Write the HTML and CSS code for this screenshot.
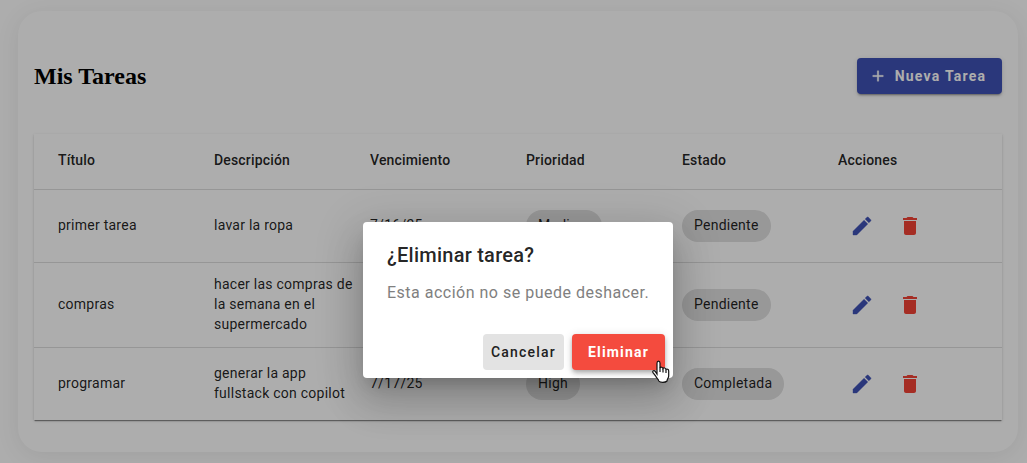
FILE: index.html
```html
<!DOCTYPE html>
<html lang="es">
<head>
<meta charset="utf-8">
<title>Mis Tareas</title>
<link rel="stylesheet" href="styles.css">
</head>
<body>
<svg class="sprite" width="0" height="0">
  <symbol id="edit" viewBox="0 0 24 24"><path d="M3 17.25V21h3.75L17.81 9.94l-3.75-3.75L3 17.25zM20.71 7.04a1 1 0 0 0 0-1.41l-2.34-2.34a1 1 0 0 0-1.41 0l-1.83 1.83 3.75 3.75 1.83-1.83z"/></symbol>
  <symbol id="delete" viewBox="0 0 24 24"><path d="M6 19c0 1.1.9 2 2 2h8c1.1 0 2-.9 2-2V7H6v12zM19 4h-3.5l-1-1h-5l-1 1H5v2h14V4z"/></symbol>
</svg>
<main class="card">
  <header class="card-header">
    <h2 class="title">Mis Tareas</h2>
    <button class="btn btn-primary"><svg class="add" viewBox="0 0 24 24"><path d="M19 13h-6v6h-2v-6H5v-2h6V5h2v6h6v2z"/></svg><span>Nueva Tarea</span></button>
  </header>
  <section class="table">
    <div class="row head"><div>Título</div><div>Descripción</div><div>Vencimiento</div><div>Prioridad</div><div>Estado</div><div>Acciones</div></div>
    <div class="row"><div>primer tarea</div><div>lavar la ropa</div><div>7/16/25</div><div><span class="chip">Medium</span></div><div><span class="chip">Pendiente</span></div><div class="actions"><svg class="edit"><use href="#edit"/></svg><svg class="delete"><use href="#delete"/></svg></div></div>
    <div class="row tall"><div>compras</div><div>hacer las compras de la semana en el supermercado</div><div></div><div></div><div><span class="chip">Pendiente</span></div><div class="actions"><svg class="edit"><use href="#edit"/></svg><svg class="delete"><use href="#delete"/></svg></div></div>
    <div class="row last"><div>programar</div><div>generar la app fullstack con copilot</div><div>7/17/25</div><div><span class="chip">High</span></div><div><span class="chip">Completada</span></div><div class="actions"><svg class="edit"><use href="#edit"/></svg><svg class="delete"><use href="#delete"/></svg></div></div>
  </section>
</main>
<div class="backdrop">
  <div class="dialog" role="dialog">
    <h3 class="dialog-title">¿Eliminar tarea?</h3>
    <p class="dialog-text">Esta acción no se puede deshacer.</p>
    <div class="dialog-actions">
      <button class="btn btn-cancel">Cancelar</button>
      <button class="btn btn-warn">Eliminar</button>
    </div>
    <svg class="cursor" viewBox="0 0 19 24"><path d="M6 14V3.2C6 .5 9 .5 9 3.2V8c.5-1.2 2.7-1 3 .5.7-1 2.6-.7 3 .9 1-.8 2.7-.1 2.7 1.5V16c0 1.8-1.7 3.2-1.7 5-1.6 1.8-6.8 1.8-8.2 0-.4-2-2.4-3-3.3-5.2L2 12.6c-1-1.8 1.1-2.7 2.2-1.3L6 14z"/><path d="M9 7.5v4.5M12 8.5v4M15 9.5v3.5"/></svg>
  </div>
</div>
</body>
</html>
```
FILE: styles.css
```css
* { box-sizing: border-box; }
body { margin: 0; padding: 11px 9px 0 18px; height: 463px; overflow: hidden; background: #fff; font-family: Roboto, sans-serif; }
.sprite { position: absolute; }
.card { height: 441px; padding: 47px 16px 0; border-radius: 24px; background: #fff; box-shadow: 0 4px 24px rgba(0,0,0,.08); }
.card-header { display: flex; justify-content: space-between; align-items: center; height: 36px; margin-bottom: 40px; }
.title { margin: 0; font: bold 24px "Liberation Serif", "Times New Roman", serif; }
.btn { height: 36px; padding: 0 16px; border: 0; border-radius: 4px; display: inline-flex; align-items: center; justify-content: center; font: 500 14px Roboto, sans-serif; letter-spacing: 1.25px; white-space: nowrap; }
.btn-primary { width: 145px; padding: 0 4px 0 0; gap: 8px; background: #3f51b5; color: #fff; font-weight: 700; box-shadow: 0 3px 1px -2px rgba(0,0,0,.2), 0 2px 2px rgba(0,0,0,.14), 0 1px 5px rgba(0,0,0,.12); }
.add { width: 18px; height: 18px; fill: #fff; stroke: #fff; stroke-width: .4; }
.table { box-shadow: 0 2px 1px -1px rgba(0,0,0,.32), 0 1px 1px rgba(0,0,0,.14), 0 1px 3px rgba(0,0,0,.12); }
.row { display: grid; grid-template-columns: repeat(6, 156px); align-items: center; height: 73px; padding: 0 0 2px 24px; border-bottom: 1px solid #dedede; color: rgba(0,0,0,.87); font-size: 14px; line-height: 20px; letter-spacing: .25px; }
.row > div { padding-right: 16px; }
.row.head { height: 56px; padding-bottom: 3px; font-weight: 500; letter-spacing: .17px; }
.row.tall { height: 85px; }
.row.last { height: 72px; border: 0; }
.chip { position: relative; top: 1px; display: inline-flex; align-items: center; height: 32px; padding: 0 12px 2px; border-radius: 16px; background: #e0e0e0; vertical-align: middle; }
.actions { display: flex; gap: 24px; padding: 2px 0 0 12px; }
.actions svg { width: 24px; height: 24px; }
.edit { fill: #3f51b5; stroke: #3f51b5; stroke-width: .4; }
.delete { fill: #f44336; }
.backdrop { position: absolute; inset: 0; display: grid; grid-template-columns: 310px; justify-content: center; align-items: start; padding: 222px 0 0 9px; background: rgba(0,0,0,.32); }
.dialog { position: relative; height: 156px; padding: 17px 8px 8px 24px; border-radius: 4px; background: #fff; box-shadow: 0 11px 15px -7px rgba(0,0,0,.2), 0 24px 38px 3px rgba(0,0,0,.14), 0 9px 46px 8px rgba(0,0,0,.12); }
.dialog-title { margin: 0; font-size: 20px; font-weight: 500; line-height: 32px; letter-spacing: .25px; color: rgba(0,0,0,.87); }
.dialog-text { margin: 10px 0 29px; font-size: 16px; line-height: 24px; letter-spacing: .5px; color: #808080; white-space: nowrap; }
.dialog-actions { display: flex; justify-content: flex-end; gap: 8px; }
.btn-cancel { width: 81px; padding: 0; background: #e3e3e3; color: #212121; letter-spacing: 1.2px; }
.btn-warn { width: 93px; padding: 0; background: #f44b3e; color: #fff; font-weight: 700; letter-spacing: 1.2px; box-shadow: 0 2px 4px -1px rgba(0,0,0,.2), 0 4px 5px rgba(0,0,0,.14), 0 1px 10px rgba(0,0,0,.12); }
.cursor { position: absolute; left: 288px; top: 138px; width: 19px; height: 24px; fill: #fff; stroke: #111; stroke-width: 1.2; }
```
